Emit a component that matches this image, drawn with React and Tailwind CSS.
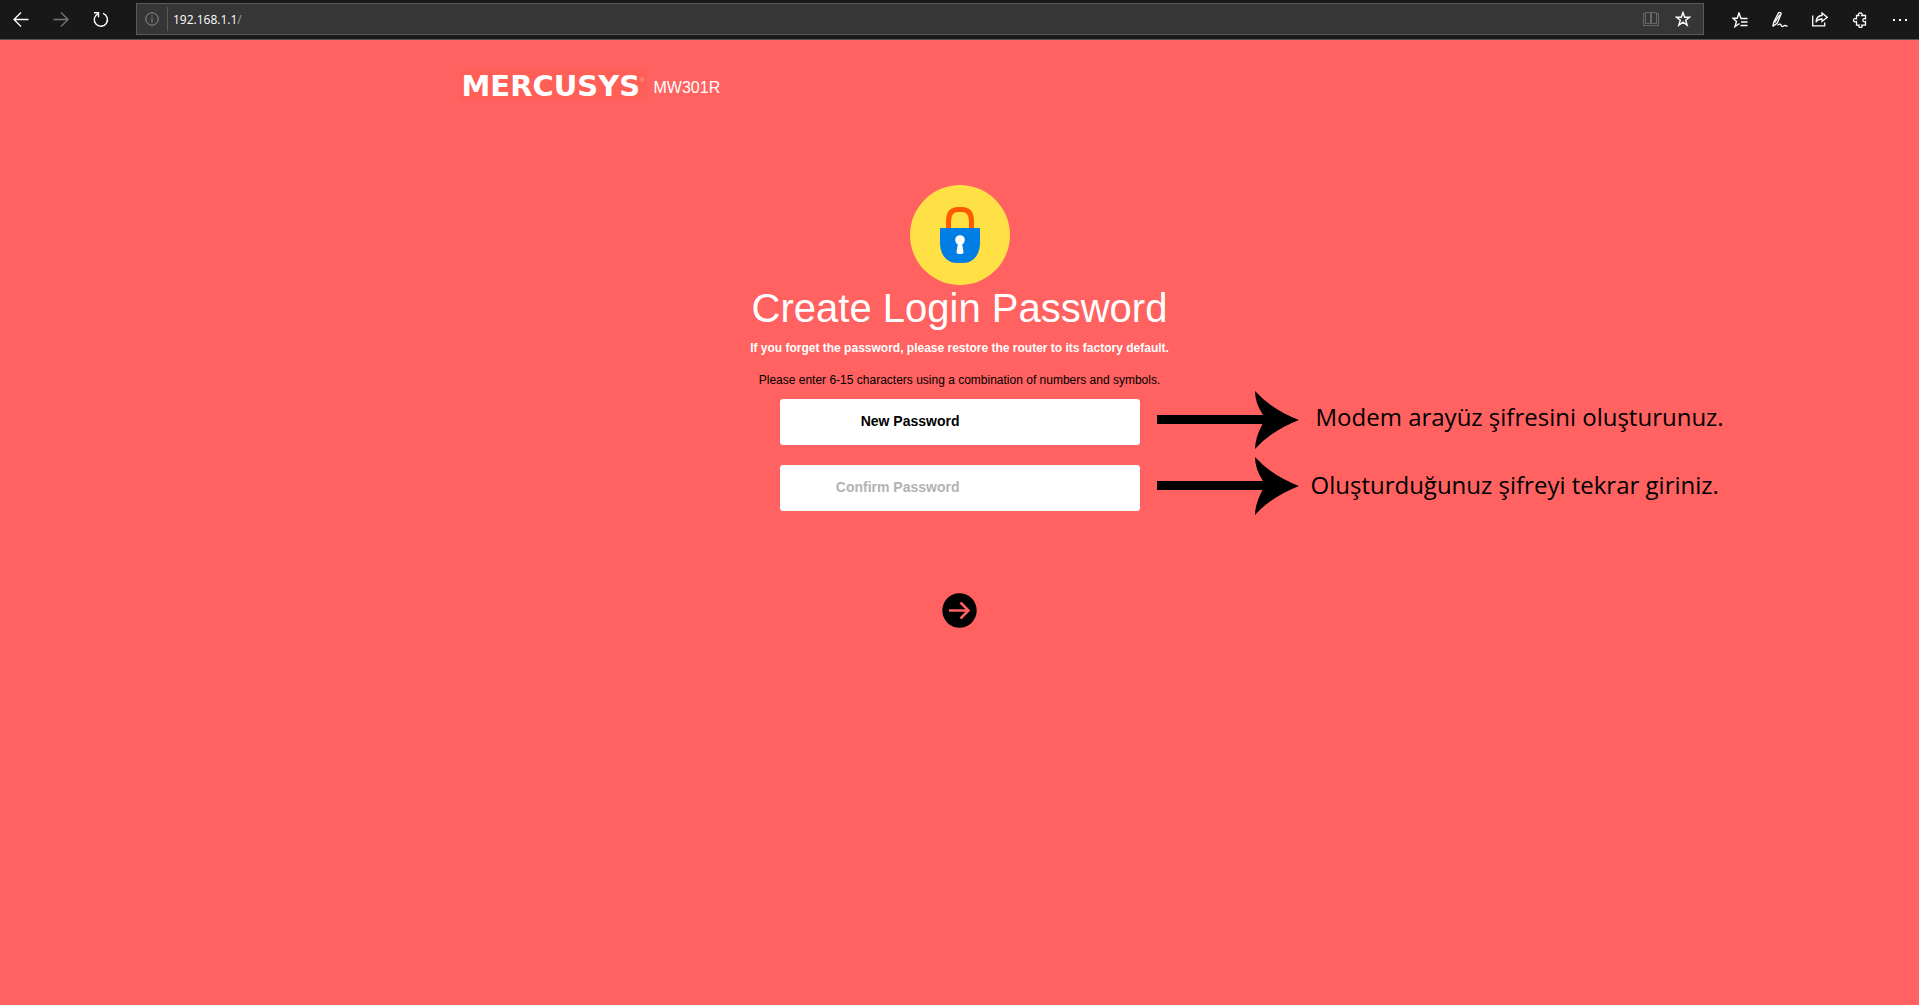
import React, { useState } from 'react';

const BackIcon = () => (
    <svg width="16" height="16" viewBox="0 0 16 16" fill="none" stroke="currentColor" strokeWidth="1.3">
        <path d="M15.500 7.500H1M8 .500l-7 7 7 7" />
    </svg>
);

const ForwardIcon = () => (
    <svg width="16" height="16" viewBox="0 0 16 16" fill="none" stroke="currentColor" strokeWidth="1.3">
        <path d="M.500 7.500H15M8 .500l7 7-7 7" />
    </svg>
);

const RefreshIcon = () => (
    <svg width="16" height="16" viewBox="0 0 16 16" fill="none" stroke="currentColor" strokeWidth="1.4">
        <path d="M4.800 1.800A6.600 6.600 0 1 0 10 1.400" />
        <path d="M1 .800h4.500v4.500" />
    </svg>
);

const InfoIcon = () => (
    <svg width="14" height="14" viewBox="0 0 14 14" fill="none" stroke="currentColor" strokeWidth="1">
        <circle cx="7" cy="7" r="6.200" />
        <path d="M7 6v4.500M7 3.500v1.200" />
    </svg>
);

const ReadingIcon = () => (
    <svg width="16" height="16" viewBox="0 0 16 16" fill="none" stroke="currentColor" strokeWidth="1">
        <path d="M2.500 1.500h5v11h-5zM8.500 1.500h5v11h-5z" />
        <path d="M2.500 2.500h-2v12h6l1.500.500 1.500-.500h6v-12h-2" />
    </svg>
);

const StarIcon = () => (
    <svg width="16" height="16" viewBox="0 0 16 16" fill="none" stroke="currentColor" strokeWidth="1.4">
        <path d="M8 1.500l1.700 4.700h4.900l-3.900 3 1.500 5L8 11.200l-4.200 3 1.500-5-3.900-3h4.900z" />
    </svg>
);

const HubIcon = () => (
    <svg width="16" height="16" viewBox="0 0 16 16" fill="none" stroke="currentColor" strokeWidth="1.400">
        <path d="M15.500 6.500H9L7 1 5.200 6.200H1l3.500 3.200-1.500 5.200L7.500 11.500" />
        <path d="M9 10h6.500M8.500 13.500h7" />
    </svg>
);

const PenIcon = () => (
    <svg width="16" height="16" viewBox="0 0 16 16" fill="none" stroke="currentColor" strokeWidth="1.300">
        <path d="M.800 14.500l1-4.500L6.300 1.200C7.200-.200 9.600.500 9 2.200L5.300 11 .800 14.500M2.800 10.500l5-8" />
        <path d="M5.500 13.300c1.800-1.300 3-1.600 3.400-.700.400 1.100.300 2 1.400 2s1.500-1.300 2.600-1.300c.800 0 1 .900 2.600.900" />
    </svg>
);

const ShareIcon = () => (
    <svg width="16" height="16" viewBox="0 0 16 16" fill="none" stroke="currentColor" strokeWidth="1.300">
        <path d="M10 1l5.200 4.300L10 9.500V7c-3 0-4.800 1-6 3.200.200-4 2.500-6.500 6-6.700z" />
        <path d="M.700 3.500v10.300h12v-3.300" />
    </svg>
);

const PuzzleIcon = () => (
    <svg width="16" height="16" viewBox="0 0 16 16" fill="none" stroke="currentColor" strokeWidth="1.300">
        <path d="M4.500 3.500h2.300C6 1.800 7 .800 8.300.800s2.300 1 1.500 2.700h3.700v3.300c-1.800-.600-2.600.200-2.600 1.400s.800 2 2.600 1.400v3.600H9.800c.800 1.300 0 2.300-1.300 2.300s-2.300-1-1.500-2.300H4.500V9.700C2.500 10.300 1.500 9.500 1.500 8.200s1-2.100 3-1.400z" />
    </svg>
);

const MoreIcon = () => (
    <svg width="16" height="16" viewBox="0 0 16 16" fill="currentColor">
        <path d="M1 7h2v2H1zM7 7h2v2H7zM13 7h2v2h-2z" />
    </svg>
);

const LockBadge = () => (
    <svg width="100" height="100" viewBox="0 0 100 100">
        <circle cx="50" cy="50" r="50" fill="#ffe145" />
        <path d="M38.500 45V36.500Q38.500 24.500 48 24.500h4Q61.500 24.500 61.500 36.500V45" fill="none" stroke="#ff5a00" strokeWidth="5" />
        <path d="M30 43h40v15c0 12-7 20-17 20h-6c-10 0-17-8-17-20z" fill="#007ee5" />
        <circle cx="50" cy="55" r="4.800" fill="#fff" />
        <path d="M48 58h4l1.500 9q0 2-3.500 2t-3.500-2z" fill="#fff" />
    </svg>
);

const PointerArrow = () => (
    <svg className="-my-2 shrink-0" width="142" height="62" viewBox="0 0 142 62">
        <path d="M0 24h106Q98 12 98 0q16 18 44 29-28 11-44 29 0-11 7.500-25H0z" />
    </svg>
);

const toolbarActions = [
    { label: 'Hub', icon: HubIcon },
    { label: 'Add notes', icon: PenIcon },
    { label: 'Share', icon: ShareIcon },
    { label: 'Extensions', icon: PuzzleIcon },
    { label: 'More', icon: MoreIcon },
];

const BrowserBar = () => (
    <header className="flex h-10 items-center border-b border-[#5c5252] bg-[#181818] text-white">
        <nav className="flex gap-6 pl-[13px]">
            <button aria-label="Back"><BackIcon /></button>
            <button aria-label="Forward" className="text-[#777777]"><ForwardIcon /></button>
            <button aria-label="Refresh"><RefreshIcon /></button>
        </nav>
        <div className="mb-px ml-[27px] flex h-8 flex-1 items-center border border-[#5a5a5a] bg-[#363636] pr-3">
            <button aria-label="Site information" className="px-2 text-[#8c8c8c]"><InfoIcon /></button>
            <div className="h-6 w-px bg-[#5a5a5a]" />
            <div className="flex flex-1 items-center pt-0.5 pl-[5px] font-['Open_Sans',sans-serif] text-[12px]">
                <input
                    aria-label="Address"
                    defaultValue="192.168.1.1"
                    className="field-sizing-content bg-transparent outline-none"
                />
                <span className="text-[#a0a0a0]">/</span>
            </div>
            <div className="flex gap-4">
                <button aria-label="Reading view" className="text-[#686868]"><ReadingIcon /></button>
                <button aria-label="Add to favorites"><StarIcon /></button>
            </div>
        </div>
        <div className="flex gap-6 pr-[11px] pl-7">
            {toolbarActions.map(({ label, icon: Icon }) => (
                <button key={label} aria-label={label}><Icon /></button>
            ))}
        </div>
    </header>
);

const PasswordField = ({ id, label, note, noteClass, placeholderClass, value, onChange }) => (
    <div className="grid w-full grid-cols-[1fr_360px_1fr] items-center">
        <input
            id={id}
            type="password"
            aria-label={label}
            placeholder={label}
            value={value}
            onChange={(e) => onChange(e.target.value)}
            className={`col-start-2 h-[46px] w-full rounded-[3px] bg-white pr-[180px] pb-0.5 text-right text-[14px] font-bold text-black outline-none ${placeholderClass}`}
        />
        <div className="flex h-[46px] items-center pl-[17px]">
            <PointerArrow />
            <p className={`font-['Open_Sans',sans-serif] text-[24px] leading-8 whitespace-nowrap text-black ${noteClass}`}>{note}</p>
        </div>
    </div>
);

const App = () => {
    const [password, setPassword] = useState('');
    const [confirm, setConfirm] = useState('');

    return (
        <div className="flex min-h-screen flex-col bg-[#ff6260] font-['Liberation_Sans',Arial,sans-serif]">
            <BrowserBar />

            <div className="mx-auto flex w-full max-w-[1000px] pt-[30px]">
                <div className="flex h-[30px] items-center bg-[#ff5f57] px-0.5 pt-0.5 text-white">
                    <span className="font-['DejaVu_Sans',sans-serif] text-[29px] leading-[28px] font-bold">MERCUSYS</span>
                    <span className="self-start pt-1 text-[6px] text-[#ffb9b9]">®</span>
                </div>
                <span className="pt-[7px] pl-[7px] text-[16px] leading-[22px] text-white">MW301R</span>
            </div>

            <main className="mt-[85px] flex flex-col items-center">
                <LockBadge />
                <h1 className="text-[40px] leading-[46px] text-white">Create Login Password</h1>
                <p className="mt-2 text-[12px] leading-[18px] font-bold text-white">
                    If you forget the password, please restore the router to its factory default.
                </p>
                <p className="mt-3.5 text-[12px] leading-[18px] text-black">
                    Please enter 6-15 characters using a combination of numbers and symbols.
                </p>
                <form className="mt-2.5 flex w-full flex-col items-center gap-5" onSubmit={(e) => e.preventDefault()}>
                    <PasswordField
                        id="new-password"
                        label="New Password"
                        note="Modem arayüz şifresini oluşturunuz."
                        noteClass="pb-2.5 pl-[17px]"
                        placeholderClass="placeholder:text-black"
                        value={password}
                        onChange={setPassword}
                    />
                    <PasswordField
                        id="confirm-password"
                        label="Confirm Password"
                        note="Oluşturduğunuz şifreyi tekrar giriniz."
                        noteClass="pb-1.5 pl-3"
                        placeholderClass="placeholder:text-[#b2b2b2]"
                        value={confirm}
                        onChange={setConfirm}
                    />
                    <button type="submit" aria-label="Next" className="mt-[62px]">
                        <svg width="35" height="35" viewBox="0 0 35 35">
                            <circle cx="17.500" cy="17.500" r="17.200" />
                            <path d="M7 17.500h19.500M18.500 9.500l8 8-8 8" fill="none" stroke="#ff6260" strokeWidth="2.500" />
                        </svg>
                    </button>
                </form>
            </main>
        </div>
    );
};

export default App;
